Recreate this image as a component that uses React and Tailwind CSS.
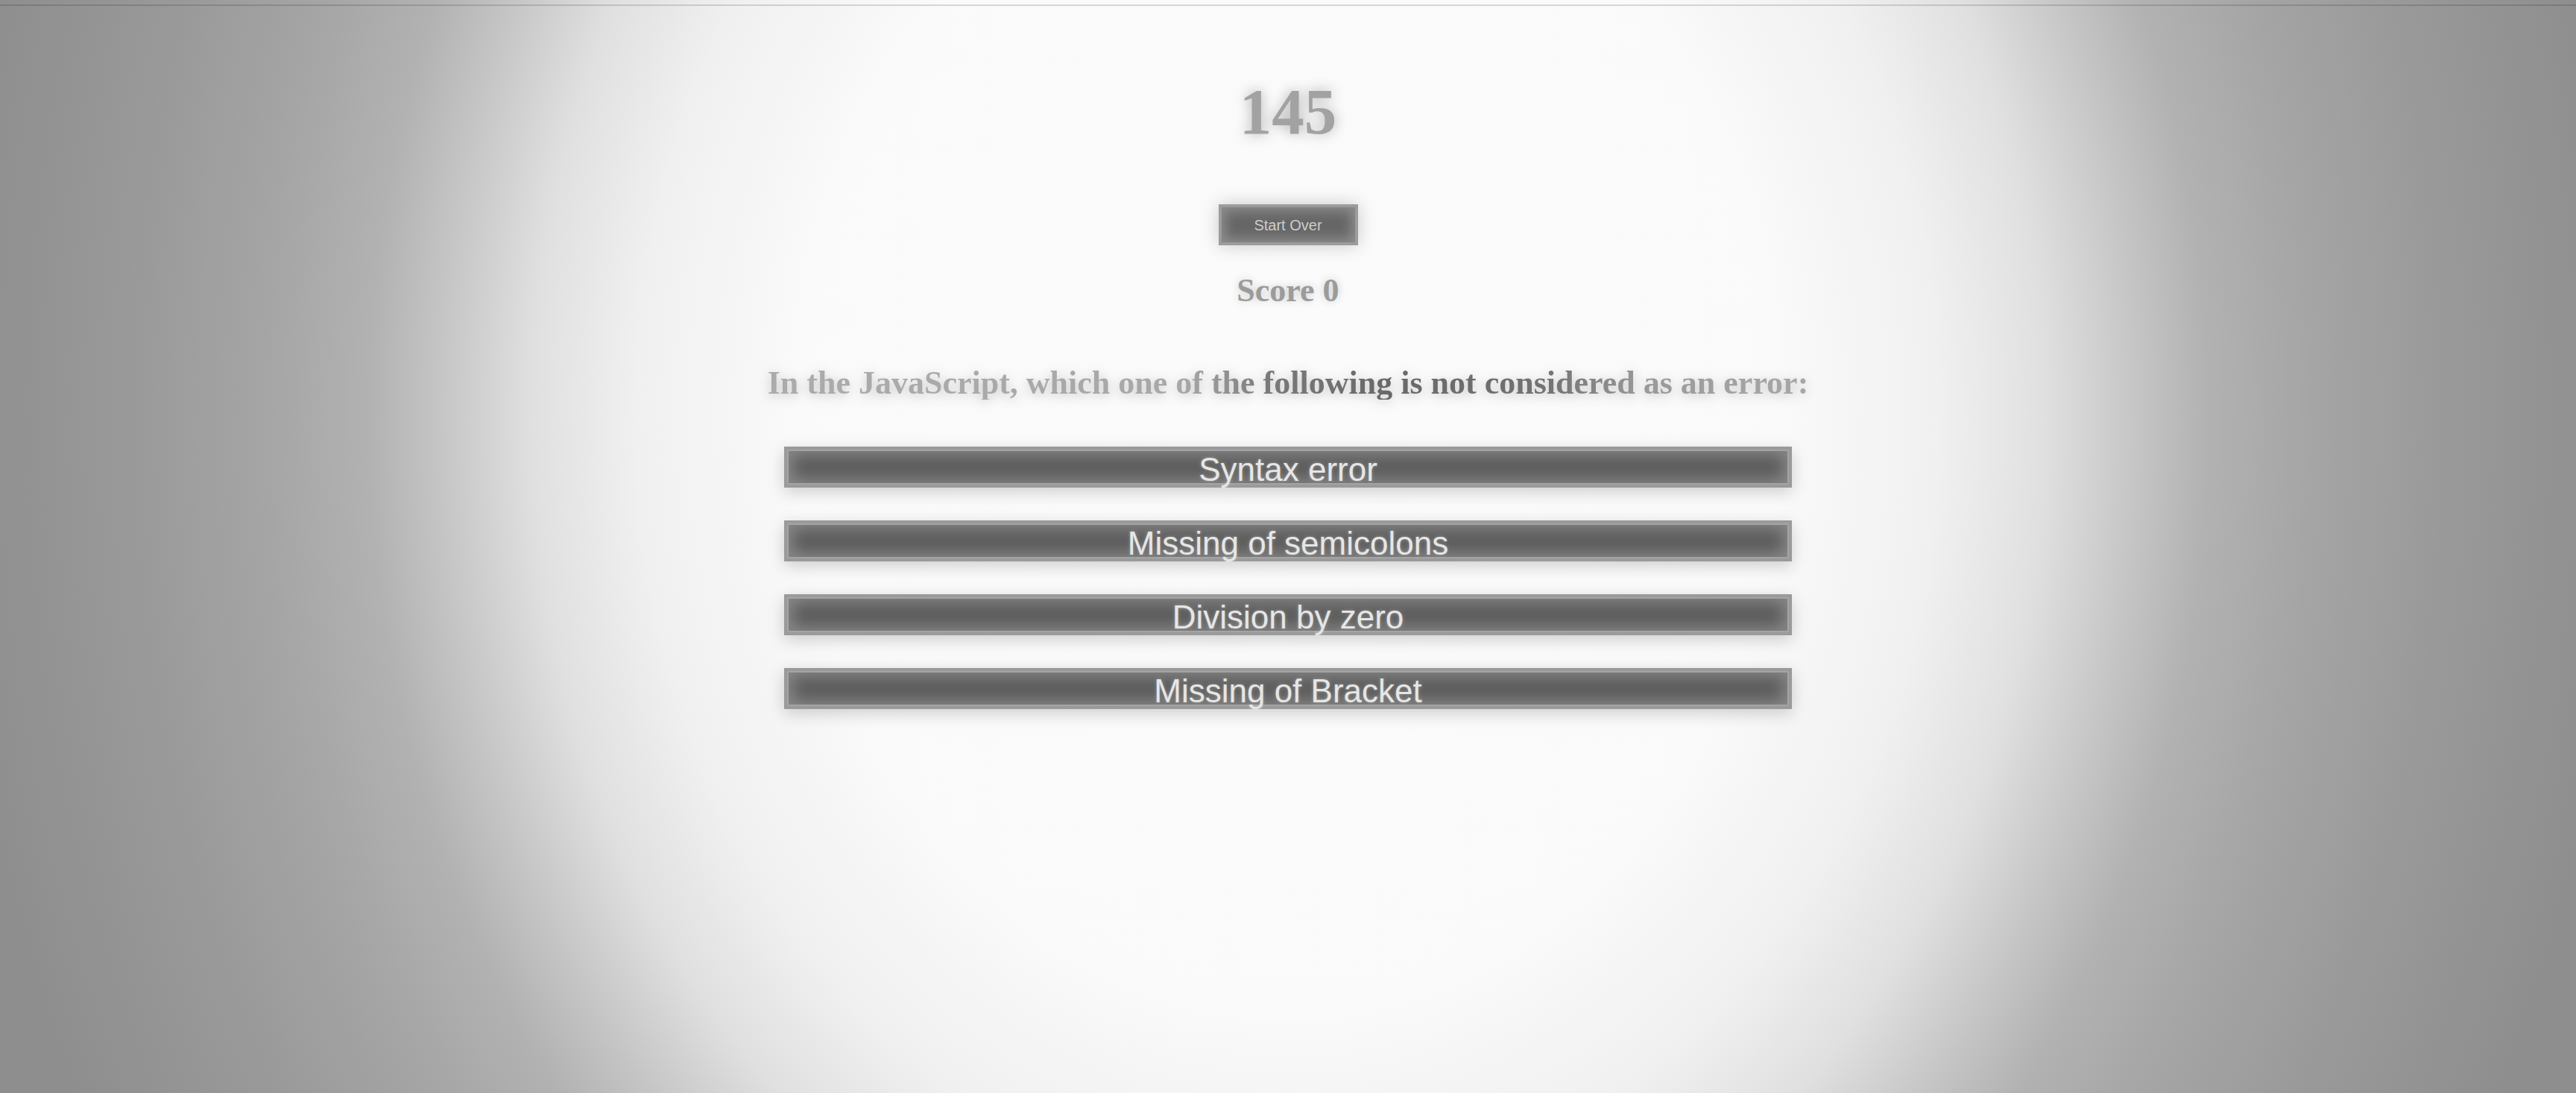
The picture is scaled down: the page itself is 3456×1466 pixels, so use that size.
import React from 'react';

const options = ['Syntax error', 'Missing of semicolons', 'Division by zero', 'Missing of Bracket'];

const App = () => {
  return (
    <div className="h-screen w-full overflow-hidden bg-[radial-gradient(ellipse_1560px_1880px_at_50%_560px,#fbfbfb_0%,#fafafa_42%,#f0f0f0_56%,#e0e0e0_65%,#c5c5c5_73%,#b2b2b2_79%,#a5a5a5_88%,#999999_100%,#8e8e8e_115%)]">
      {/* top rule */}
      <div className="pt-[6px]">
        <div className="h-[2px] w-full bg-[rgba(0,0,0,0.14)]"></div>
      </div>

      <div className="flex flex-col items-center">
        {/* timer */}
        <h1 className="mt-[98px] font-['Liberation_Serif',serif] text-[87px] leading-none font-bold text-[#a2a2a2] [text-shadow:0_0_18px_rgba(0,0,0,0.3)]">
          145
        </h1>

        <button className="mt-[81px] h-[55px] w-[187px] border-4 border-[#9c9c9c] bg-[#666666] font-['Liberation_Sans',Arial,sans-serif] text-[20px] leading-none text-[#cdcdcd] shadow-[inset_0_0_16px_5px_#8e8e8e,0_0_24px_rgba(0,0,0,0.2)]">
          Start Over
        </button>

        <h2 className="mt-[39px] font-['Liberation_Serif',serif] text-[44px] leading-none font-bold text-[#9b9b9b] [text-shadow:0_0_12px_rgba(0,0,0,0.2)]">
          Score 0
        </h2>

        <h2 className="mt-[80px] bg-[linear-gradient(90deg,#ababab_0%,#a8a8a8_40%,#7a7a7a_48%,#686868_60%,#737373_75%,#999999_84%,#a8a8a8_100%)] bg-clip-text font-['Liberation_Serif',serif] text-[44px] leading-none font-bold text-transparent drop-shadow-[0_3px_8px_rgba(0,0,0,0.22)]">
          In the JavaScript, which one of the following is not considered as an error:
        </h2>

        <div className="mt-[63px] flex w-[1352px] flex-col gap-[44px]">
          {options.map((opt) => (
            <button
              key={opt}
              className="h-[55px] w-full border-4 border-[#9a9a9a] bg-[#5a5a5a] pt-[5px] font-['Liberation_Sans',Arial,sans-serif] text-[44px] leading-[44px] text-[#e6e6e6] shadow-[inset_0_0_0_2px_#a4a4a4,inset_0_0_22px_7px_#8a8a8a,0_6px_22px_rgba(0,0,0,0.18)] [text-shadow:0_0_5px_rgba(255,255,255,0.3)]"
            >
              {opt}
            </button>
          ))}
        </div>
      </div>
    </div>
  );
};

export default App;
